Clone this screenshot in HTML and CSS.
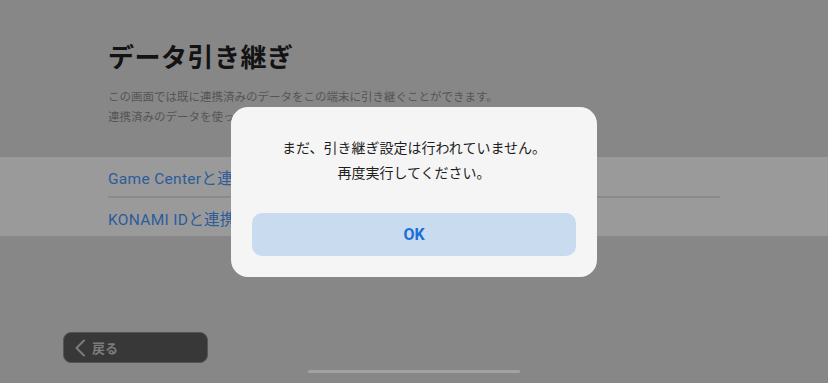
FILE: index.html
```html
<!DOCTYPE html>
<html lang="ja">
<head>
<meta charset="utf-8">
<title>データ引き継ぎ</title>
<link rel="stylesheet" href="styles.css">
</head>
<body>
<div class="page">
  <header class="head">
    <h1 class="title">データ引き継ぎ</h1>
    <p class="desc">この画面では既に連携済みのデータをこの端末に引き継ぐことができます。</p>
    <p class="desc">連携済みのデータを使って引き継ぎを行います。</p>
  </header>
  <ul class="list">
    <li class="row"><span class="link">Game Centerと連携する</span></li>
    <li class="row"><span class="link">KONAMI IDと連携する</span></li>
  </ul>
  <div class="footer">
    <button class="back">
      <svg class="chev" width="12" height="18" viewBox="0 0 12 18"><path d="M10 1.5 L2.5 9 L10 16.5" fill="none" stroke="currentColor" stroke-width="2" stroke-linecap="round" stroke-linejoin="round"/></svg>
      <span>戻る</span>
    </button>
  </div>
</div>
<div class="home-bar"></div>
<div class="overlay">
  <div class="dialog">
    <p class="msg">まだ、引き継ぎ設定は行われていません。<br>再度実行してください。</p>
    <button class="ok">OK</button>
  </div>
</div>
</body>
</html>
```
FILE: styles.css
```css
* { box-sizing: border-box; }
html, body { margin: 0; padding: 0; }
body {
  width: 828px;
  height: 383px;
  overflow: hidden;
  background: #878787;
  font-family: "Noto Sans CJK JP", "Noto Sans", sans-serif;
}
.page {
  display: flex;
  flex-direction: column;
  height: 383px;
}
.head {
  padding: 38px 0 0 108px;
}
.title {
  margin: 0 0 12px;
  font-size: 26px;
  line-height: 36px;
  font-weight: 700;
  color: #131313;
  letter-spacing: 0.5px;
}
.desc {
  margin: 0;
  font-size: 11.5px;
  line-height: 20px;
  color: #555;
}
.list {
  list-style: none;
  margin: 31px 0 0;
  padding: 0;
  background: #9a9a9a;
}
.row {
  height: 40px;
  margin-left: 108px;
  width: 612px;
  display: flex;
  align-items: center;
  padding-top: 1px;
}
.row + .row {
  border-top: 2px solid #8a8a8a;
}
.row:first-child { height: 39px; }
.link {
  font-family: "Roboto", "Noto Sans CJK JP", sans-serif;
  font-size: 15.5px;
  color: #2c5c9a;
  letter-spacing: 0.3px;
}
.footer {
  padding: 96px 0 0 63px;
}
.back {
  width: 145px;
  height: 31px;
  border: 1px solid #555;
  border-radius: 8px;
  background: #383838;
  color: #7c7c7c;
  display: flex;
  align-items: center;
  gap: 6px;
  padding: 0 0 0 10px;
  font-family: "Noto Sans CJK JP", sans-serif;
  font-size: 13px;
  font-weight: 700;
}
.chev { display: block; }
.home-bar {
  position: fixed;
  left: 308px;
  top: 370px;
  width: 212px;
  height: 3px;
  border-radius: 2px;
  background: #a2a2a2;
}
.overlay {
  position: fixed;
  inset: 0;
  display: flex;
  align-items: center;
  justify-content: center;
}
.dialog {
  width: 366px;
  height: 170px;
  background: #f5f5f5;
  border-radius: 17px;
  padding: 28px 21px 0;
  display: flex;
  flex-direction: column;
  align-items: center;
}
.msg {
  margin: 0;
  text-align: center;
  font-size: 14px;
  line-height: 25px;
  color: #1e1e1e;
}
.ok {
  margin-top: 28px;
  width: 324px;
  height: 43px;
  border: none;
  border-radius: 10px;
  background: #c9dcef;
  color: #1b6fd6;
  font-family: "Roboto", sans-serif;
  font-size: 16px;
  font-weight: 700;
}
```
